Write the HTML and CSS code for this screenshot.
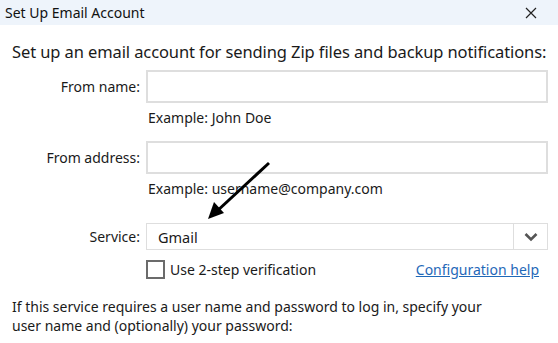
FILE: index.html
```html
<!DOCTYPE html>
<html lang="en">

<head>
  <meta charset="UTF-8">
  <title>Set Up Email Account</title>
  <link rel="stylesheet" href="styles.css">
</head>

<body>
  <div class="window">
    <div class="titlebar">
      <span class="title">Set Up Email Account</span>
      <button class="close" aria-label="Close">
        <svg width="12" height="12" viewBox="0 0 12 12">
          <path d="M1 1 L11 11 M11 1 L1 11" stroke="#222" stroke-width="1.2" fill="none" />
        </svg>
      </button>
    </div>

    <div class="content">
      <p class="intro">Set up an email account for sending Zip files and backup notifications:</p>

      <div class="form-grid">
        <label class="label" for="from-name">From name:</label>
        <input class="field" type="text" id="from-name">
        <span></span>
        <span class="hint">Example: John Doe</span>

        <label class="label" for="from-address">From address:</label>
        <input class="field" type="text" id="from-address">
        <span></span>
        <span class="hint">Example: username@company.com</span>

        <label class="label service-label" for="service">Service:</label>
        <div class="select" id="service">
          <span class="select-value">Gmail</span>
          <span class="select-btn">
            <svg width="14" height="10" viewBox="0 0 14 10">
              <path d="M1.5 2 L7 7.5 L12.5 2" stroke="#555" stroke-width="2.6" fill="none" />
            </svg>
          </span>
        </div>
        <span></span>
        <div class="check-row">
          <label class="check">
            <span class="box"></span>
            Use 2-step verification
          </label>
          <a href="#" class="help">Configuration help</a>
        </div>
      </div>

      <p class="note">If this service requires a user name and password to log in, specify your user name and (optionally) your password:</p>
    </div>

    <!-- pijl over het formulier -->
    <svg class="arrow" width="558" height="343" viewBox="0 0 558 343">
      <line x1="269" y1="163" x2="216" y2="212" stroke="#000" stroke-width="3" />
      <polygon points="208,219 214,202 224,213" fill="#000" />
    </svg>
  </div>
</body>

</html>
```

FILE: styles.css
```css
/* Basis van de pagina */
body {
  margin: 0;
  background-color: white;
  color: #1a1a1a;
  font-family: "Noto Sans", "Open Sans", sans-serif;
}

.window {
  position: relative;
  width: 558px;
  height: 343px;
  overflow: hidden;
}

/* Titelbalk bovenaan */
.titlebar {
  height: 25px;
  background-color: #eef4fb;
  display: flex;
  align-items: center;
  justify-content: space-between;
  padding-left: 5px;
}

.title {
  font-size: 14px;
  color: #111;
}

.close {
  background: none;
  border: none;
  width: 46px;
  height: 25px;
  padding: 0;
  margin-right: 4px;
  display: flex;
  align-items: center;
  justify-content: center;
}

.content {
  padding: 0 10px 0 12px;
}

.intro {
  margin: 15px 0 0;
  font-size: 16.5px;
  letter-spacing: -0.1px;
  line-height: 23px;
  white-space: nowrap;
}

/* Formulier met labels links en velden rechts */
.form-grid {
  display: grid;
  grid-template-columns: 128px 402px;
  column-gap: 6px;
  margin-top: 7px;
  font-size: 14px;
}

.label {
  text-align: right;
  align-self: center;
  font-size: 14px;
}

.field {
  height: 33px;
  box-sizing: border-box;
  border: 2px solid #dedede;
  margin: 0;
  outline: none;
}

.hint {
  padding: 6px 0 0 2px;
  height: 38px;
  box-sizing: border-box;
  line-height: 17px;
}

.select {
  height: 27px;
  margin-top: 11px;
  box-sizing: border-box;
  border: 1px solid #dedede;
  display: flex;
  align-items: center;
}

.service-label {
  padding-top: 11px;
}

.select-value {
  flex: 1;
  padding-left: 11px;
  font-size: 14.5px;
}

.select-btn {
  width: 33px;
  height: 100%;
  border-left: 1px solid #dedede;
  display: flex;
  align-items: center;
  justify-content: center;
}

.check-row {
  display: flex;
  justify-content: space-between;
  align-items: center;
  margin-top: 10px;
  padding-right: 9px;
}

.check {
  display: flex;
  align-items: center;
  gap: 5px;
}

.box {
  width: 19px;
  height: 19px;
  box-sizing: border-box;
  border: 2px solid #6b6b6b;
}

.help {
  color: #1f68b8;
}

.note {
  margin: 18px 0 0;
  max-width: 480px;
  font-size: 14px;
  line-height: 19px;
}

/* Pijl ligt over de inhoud heen */
.arrow {
  position: absolute;
  top: 0;
  left: 0;
  pointer-events: none;
}
```
